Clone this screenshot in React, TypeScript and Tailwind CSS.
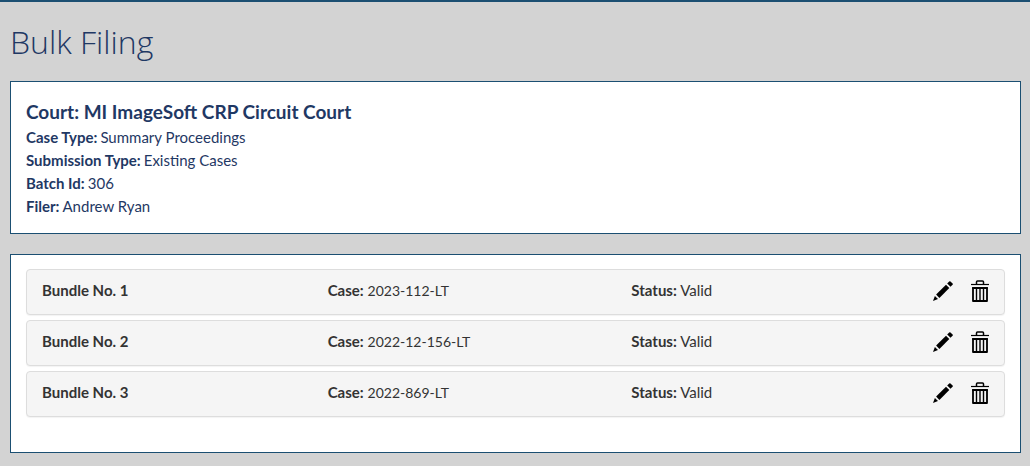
const details = [
  { label: 'Case Type:', value: 'Summary Proceedings' },
  { label: 'Submission Type:', value: 'Existing Cases' },
  { label: 'Batch Id:', value: '306' },
  { label: 'Filer:', value: 'Andrew Ryan' },
];

const bundles = [
  { id: 1, caseNumber: '2023-112-LT', status: 'Valid' },
  { id: 2, caseNumber: '2022-12-156-LT', status: 'Valid' },
  { id: 3, caseNumber: '2022-869-LT', status: 'Valid' },
];

function PencilIcon() {
  return (
    <svg viewBox="0 0 22 22" className="h-[22px] w-[22px]" fill="currentColor" aria-hidden="true">
      <path d="M1 21 L2.9 16 L6 19.1 Z" />
      <path d="M4.1 14.6 L14 4.7 L17.3 8 L7.4 17.9 Z" />
      <path d="M15.2 3.5 L17.2 1.5 Q17.9 0.9 18.5 1.5 L20.6 3.6 Q21.1 4.2 20.6 4.8 L18.5 6.8 Z" />
    </svg>
  );
}

function TrashIcon() {
  return (
    <svg viewBox="0 0 18 22" className="h-[22px] w-[18px]" fill="none" stroke="currentColor" aria-hidden="true">
      <path d="M0 4.5 H18" strokeWidth="1.2" />
      <path d="M5.5 4 V2 Q5.5 1 6.5 1 H11.5 Q12.5 1 12.5 2 V4" strokeWidth="1.5" />
      <path d="M2 8 H16 V21 H2 Z" strokeWidth="1.8" strokeLinejoin="round" />
      <path d="M1.2 8 H16.8" strokeWidth="2" />
      <path d="M5.5 8 V20.5 M9 8 V20.5 M12.5 8 V20.5" strokeWidth="1.4" />
    </svg>
  );
}

export default function App() {
  return (
    <main className="min-h-screen border-t-2 border-[#1b4f72] bg-[#d3d3d3] pr-[9px] pb-3 pl-[10px] font-['Lato',sans-serif] text-[15px] text-[#1f3864]">
      <h1 className="pt-5 pb-[19px] font-['Open_Sans',sans-serif] text-[32px] leading-10 font-light">Bulk Filing</h1>

      <section className="border border-[#1b4f72] bg-white px-[15px] pt-[18px] pb-[15px]">
        <h2 className="text-[19px] leading-6 font-bold">Court: MI ImageSoft CRP Circuit Court</h2>
        <dl className="pt-[2px]">
          {details.map((item) => (
            <div key={item.label} className="flex gap-[3px] leading-[23px]">
              <dt className="font-bold">{item.label}</dt>
              <dd>{item.value}</dd>
            </div>
          ))}
        </dl>
      </section>

      <section className="mt-5 border border-[#1b4f72] bg-white px-[15px] pt-[14px] pb-[35px] text-[#333]">
        <ul className="flex flex-col gap-[5px]">
          {bundles.map((bundle) => (
            <li
              key={bundle.id}
              className="grid grid-cols-[286fr_304fr_301fr_auto] rounded border border-[#ddd] bg-[#f5f5f5] px-[15px] pt-[10px] pb-3 shadow-[0_1px_1px_rgba(0,0,0,0.05)]"
            >
              <strong className="leading-5">Bundle No. {bundle.id}</strong>
              <span className="leading-5">
                <strong>Case:</strong> <span className="text-sm leading-5">{bundle.caseNumber}</span>
              </span>
              <span className="leading-5">
                <strong>Status:</strong> {bundle.status}
              </span>
              <span className="flex gap-[17px] text-black">
                <button type="button" aria-label={`Edit bundle ${bundle.id}`} className="cursor-pointer">
                  <PencilIcon />
                </button>
                <button type="button" aria-label={`Delete bundle ${bundle.id}`} className="cursor-pointer">
                  <TrashIcon />
                </button>
              </span>
            </li>
          ))}
        </ul>
      </section>
    </main>
  );
}
